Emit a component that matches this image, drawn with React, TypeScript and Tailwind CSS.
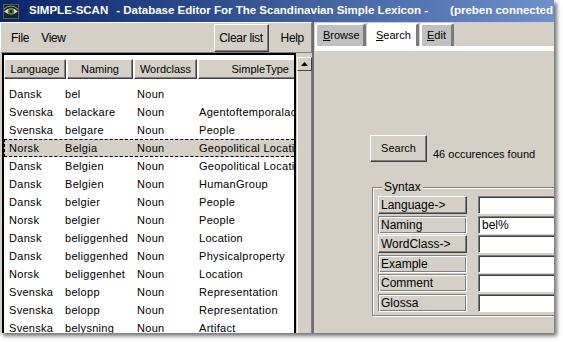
import React from "react";

type Row = [string, string, string, string, boolean?];

const rows: Row[] = [
  ["Dansk", "bel", "Noun", ""],
  ["Svenska", "belackare", "Noun", "Agentoftemporalactivity"],
  ["Svenska", "belgare", "Noun", "People"],
  ["Norsk", "Belgia", "Noun", "Geopolitical Location", true],
  ["Dansk", "Belgien", "Noun", "Geopolitical Location"],
  ["Dansk", "Belgien", "Noun", "HumanGroup"],
  ["Dansk", "belgier", "Noun", "People"],
  ["Norsk", "belgier", "Noun", "People"],
  ["Dansk", "beliggenhed", "Noun", "Location"],
  ["Dansk", "beliggenhed", "Noun", "Physicalproperty"],
  ["Norsk", "beliggenhet", "Noun", "Location"],
  ["Svenska", "belopp", "Noun", "Representation"],
  ["Svenska", "belopp", "Noun", "Representation"],
  ["Svenska", "belysning", "Noun", "Artifact"],
  ["Svenska", "belysning", "Noun", "Artifact"],
];

const fields: { label: string; raised: boolean; value: string }[] = [
  { label: "Language->", raised: true, value: "" },
  { label: "Naming", raised: false, value: "bel%" },
  { label: "WordClass->", raised: true, value: "" },
  { label: "Example", raised: false, value: "" },
  { label: "Comment", raised: false, value: "" },
  { label: "Glossa", raised: false, value: "" },
];

function EyeIcon() {
  return (
    <svg width="16" height="15" viewBox="0 0 16 15">
      <rect x="0" y="0" width="16" height="15" fill="#5a5a5a" />
      <rect x="1" y="1" width="14" height="13" fill="#202020" />
      <path d="M1 7.5 Q8 1 15 7.5 Q8 13 1 7.5 Z" fill="#d8d8d8" />
      <circle cx="8" cy="7.5" r="3.2" fill="#3f8a3a" />
      <circle cx="8" cy="7.5" r="1.4" fill="#0d1a0d" />
      <path d="M1 5 Q8 -1 15 5" stroke="#9a9a9a" strokeWidth="1" fill="none" />
    </svg>
  );
}

export default function App() {
  return (
    <div className="w-[563px] h-[342px] bg-white overflow-hidden font-['Liberation_Sans',Arial,sans-serif]">
      <div className="w-[554px] h-[333px] bg-[#d4d0c8] flex flex-col shadow-[3px_3px_4px_rgba(0,0,0,0.55)]">
        {/* Title bar */}
        <div className="h-[22px] flex items-center bg-gradient-to-r from-[#0a246a] via-[#3a5a98] to-[#7090cc] text-white font-bold text-[11.5px] whitespace-pre overflow-hidden">
          <div className="ml-[3px] flex-none">
            <EyeIcon />
          </div>
          <span className="ml-[10px] flex-none">SIMPLE-SCAN</span>
          <span className="ml-[8px] flex-none">- Database Editor For The Scandinavian Simple Lexicon -</span>
          <span className="ml-[22px] flex-none">(preben connected</span>
        </div>

        <div className="flex flex-1 min-h-0">
          {/* Left panel */}
          <div className="w-[312px] flex flex-col flex-none">
            {/* Menu bar */}
            <div className="h-[31px] flex items-center border-t border-l border-t-white border-l-white border-b border-r border-b-[#808080] border-r-[#808080] text-[12px] tracking-[-0.3px] text-black">
              <span className="ml-[10px]">File</span>
              <span className="ml-[12px]">View</span>
              <div className="flex-1" />
              <div className="w-[55px] h-[28px] flex items-center justify-center border border-t-white border-l-white border-b-[#404040] border-r-[#404040] shadow-[inset_-1px_-1px_0_#808080]">
                Clear list
              </div>
              <span className="ml-[12px] mr-[7px]">Help</span>
            </div>

            {/* List + scrollbar */}
            <div className="flex flex-1 min-h-0 pl-[2px]">
              <div className="w-[294px] border-t-2 border-l-2 border-r-2 border-black bg-white overflow-hidden pt-[4px] flex flex-col">
                {/* Header */}
                <div className="h-[20px] flex flex-none text-[11px] text-black">
                  {[
                    ["Language", "w-[62px] justify-center"],
                    ["Naming", "w-[66px] justify-center"],
                    ["Wordclass", "w-[63px] justify-center"],
                    ["SimpleType", "w-[110px] justify-end pr-[18px]"],
                  ].map(([t, c]) => (
                    <div
                      key={t}
                      className={`${c} h-[20px] mr-[1px] flex flex-none items-center bg-[#d4d0c8] border border-t-white border-l-white border-b-[#404040] border-r-[#404040] shadow-[inset_-1px_-1px_0_#808080]`}
                    >
                      {t}
                    </div>
                  ))}
                </div>
                {/* Rows */}
                <div className="pt-[6px] flex flex-col text-[11px] tracking-[0.3px] text-black">
                  {rows.map((r, i) => (
                    <div
                      key={i}
                      className={`h-[18px] flex items-center whitespace-nowrap overflow-hidden ${
                        r[4]
                          ? "bg-[#d4d0c8] border-y border-l border-dashed border-black"
                          : ""
                      }`}
                    >
                      <span className={`${r[4] ? "w-[60px] pl-[4px]" : "w-[61px] pl-[5px]"} flex-none`}>
                        {r[0]}
                      </span>
                      <span className="w-[72px] flex-none">{r[1]}</span>
                      <span className="w-[62px] flex-none">{r[2]}</span>
                      <span className="flex-none">{r[3]}</span>
                    </div>
                  ))}
                </div>
              </div>
              {/* Scrollbar */}
              <div className="w-[16px] pt-[4px] pl-[1px] flex flex-col">
                <div className="w-[15px] h-[14px] flex items-center justify-center bg-[#d4d0c8] border border-t-white border-l-white border-b-[#404040] border-r-[#404040]">
                  <svg width="7" height="4" viewBox="0 0 7 4">
                    <path d="M3.5 0 L7 4 L0 4 Z" fill="#000" />
                  </svg>
                </div>
                <div className="flex-1 w-[15px] border-l border-white border-r border-r-[#808080] bg-[#d4d0c8]" />
              </div>
            </div>
          </div>

          {/* Right panel */}
          <div className="flex-1 min-w-0 flex flex-col border-l-2 border-[#6e6e6e] overflow-hidden">
            {/* Tabs */}
            <div className="h-[24px] flex items-end pl-[1px] text-[11px] text-black">
              <div className="w-[51px] h-[23px] mr-[1px] flex items-center pl-[6px] bg-[#c0c0c0] border-t-2 border-l-2 border-white border-r-[3px] border-r-[#7a7a7a] rounded-tl-[3px] rounded-tr-[3px]">
                <span>
                  <u>B</u>rowse
                </span>
              </div>
              <div className="w-[52px] h-[23px] mr-[1px] flex items-center pl-[7px] bg-white border-t-2 border-l-2 border-white border-r-[3px] border-r-[#7a7a7a] rounded-tl-[3px] rounded-tr-[3px]">
                <span>
                  <u>S</u>earch
                </span>
              </div>
              <div className="w-[34px] h-[23px] flex items-center pl-[5px] bg-[#c0c0c0] border-t-2 border-l-2 border-white border-r-[3px] border-r-[#7a7a7a] rounded-tl-[3px] rounded-tr-[3px]">
                <span>
                  <u>E</u>dit
                </span>
              </div>
            </div>
            <div className="h-[5px] ml-[1px] bg-white flex-none" />

            {/* Search content */}
            <div className="flex-1 pl-[56px] pt-[84px] text-black">
              <div className="flex items-end">
                <div className="w-[57px] h-[27px] flex items-center justify-center text-[11px] border border-t-white border-l-white border-b-[#404040] border-r-[#404040] shadow-[inset_-1px_-1px_0_#808080]">
                  Search
                </div>
                <span className="ml-[6px] mb-[1px] text-[11px] leading-[13px]">46 occurences found</span>
              </div>

              <div className="relative mt-[25px] ml-[2px] w-[220px] border border-[#808080] shadow-[inset_1px_1px_0_#fff,1px_1px_0_#fff] pt-[8px] pl-[5px] pb-[3px]">
                <span className="absolute -top-[8px] left-[9px] px-[2px] bg-[#d4d0c8] text-[12px] leading-[14px]">
                  Syntax
                </span>
                <div className="flex flex-col gap-[1.5px]">
                  {fields.map((f) => (
                    <div key={f.label} className="flex h-[18px]">
                      <div
                        className={`w-[89px] h-[18px] flex items-center pl-[2px] text-[12px] leading-[14px] ${
                          f.raised
                            ? "border border-t-white border-l-white border-b-[#404040] border-r-[#404040] shadow-[inset_-1px_-1px_0_#808080]"
                            : "border border-t-[#808080] border-l-[#808080] border-b-white border-r-white shadow-[inset_1px_1px_0_#fff,inset_-1px_-1px_0_#808080]"
                        }`}
                      >
                        {f.label}
                      </div>
                      <div className="ml-[11px] w-[110px] h-[18px] flex items-center pl-[3px] bg-white text-[12px] border border-t-[#808080] border-l-[#808080] border-b-white border-r-white shadow-[inset_1px_1px_0_#404040]">
                        {f.value}
                      </div>
                    </div>
                  ))}
                </div>
              </div>
            </div>
          </div>
        </div>
      </div>
    </div>
  );
}
